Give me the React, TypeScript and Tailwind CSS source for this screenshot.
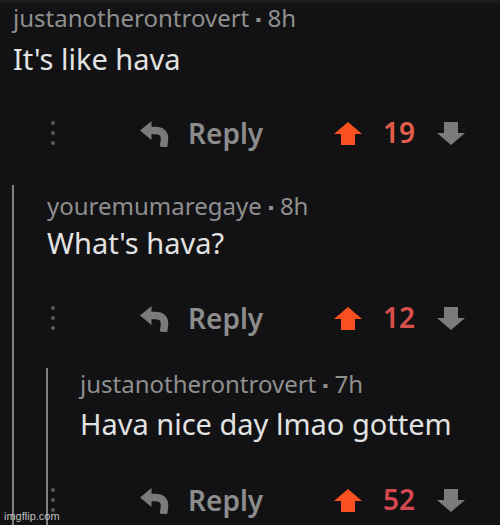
import React from "react";

function ReplyIcon() {
  return (
    <svg width="29" height="26" viewBox="0 0 29 26" className="block">
      <polygon points="0,9.5 11.5,0 11.5,19" fill="#7a7a7a" />
      <path d="M9 9.5 H15 Q25 9.5 24.5 18.5 L23.5 26" stroke="#7a7a7a" strokeWidth="7.5" fill="none" />
    </svg>
  );
}

function UpArrow() {
  return (
    <svg width="28" height="23" viewBox="0 0 28 23" className="block">
      <polygon points="14,0 28,12 21,12 21,23 7,23 7,12 0,12" fill="#fa5020" />
    </svg>
  );
}

function DownArrow() {
  return (
    <svg width="28" height="23" viewBox="0 0 28 23" className="block">
      <polygon points="14,23 28,11 21,11 21,0 7,0 7,11 0,11" fill="#7b7b7b" />
    </svg>
  );
}

function ActionRow({ pad, count, color }: { pad: string; count: string; color: string }) {
  return (
    <div className={`flex h-[56px] items-center ${pad}`}>
      <div className="w-[90px] flex">
        <div className="flex w-[6px] flex-col items-center gap-[6px]">
          <div className="h-[4px] w-[4px] rounded-full bg-[#5a5a5a]" />
          <div className="h-[4px] w-[4px] rounded-full bg-[#5a5a5a]" />
          <div className="h-[4px] w-[4px] rounded-full bg-[#5a5a5a]" />
        </div>
      </div>
      <div className="flex w-[194px] items-center">
        <div className="mt-[2px]">
          <ReplyIcon />
        </div>
        <span className="ml-[19px] text-[28px] font-semibold leading-none text-[#8c8c8c]">Reply</span>
      </div>
      <UpArrow />
      <div className="ml-[21px] w-[54px]">
        <span className={`text-[28px] font-semibold leading-none ${color}`}>{count}</span>
      </div>
      <DownArrow />
    </div>
  );
}

function Header({ name, time }: { name: string; time: string }) {
  return (
    <div className="h-[30px] text-[24px] leading-[30px] text-[#8f8f8f] whitespace-nowrap">
      {name} <span className="text-[16px] align-[2px]">▪</span> {time}
    </div>
  );
}

function Body({ text, mt }: { text: string; mt: string }) {
  return (
    <div className={`${mt} h-[36px] text-[29px] leading-[36px] text-[#e2e2e2] whitespace-nowrap`}>{text}</div>
  );
}

export default function App() {
  return (
    <div
      className="relative h-[525px] w-[500px] overflow-hidden bg-[#121214]"
      style={{ fontFamily: '"Noto Sans", "Open Sans", sans-serif' }}
    >
      <div className="h-[3px] bg-[#1d1d1f]" />
      <div className="pl-[13px]">
        <Header name="justanotherontrovert" time="8h" />
        <Body text="It's like hava" mt="mt-[8px]" />
      </div>
      <div className="mt-[28px]">
        <ActionRow pad="pl-[50px]" count="19" color="text-[#e45d4c]" />
      </div>
      <div className="ml-[12px] mt-[24px] border-l-2 border-[#808080]">
        <div className="pl-[33px] pt-[6px]">
          <Header name="youremumaregaye" time="8h" />
          <Body text="What's hava?" mt="mt-[4px]" />
        </div>
        <div className="mt-[29px]">
          <ActionRow pad="pl-[36px]" count="12" color="text-[#d9504a]" />
        </div>
        <div className="ml-[32px] mt-[22px] border-l-2 border-[#808080]">
          <div className="pl-[32px] pt-[1px]">
            <Header name="justanotherontrovert" time="7h" />
            <Body text="Hava nice day lmao gottem" mt="mt-[7px]" />
          </div>
          <div className="mt-[30px]">
            <ActionRow pad="pl-[2px]" count="52" color="text-[#d4484f]" />
          </div>
        </div>
      </div>
      <div
        className="absolute bottom-[3px] left-[4px] text-[11px] leading-none text-[#d8d8d8]/90"
        style={{ fontFamily: '"Liberation Sans", Arial, sans-serif' }}
      >
        imgflip.com
      </div>
    </div>
  );
}
